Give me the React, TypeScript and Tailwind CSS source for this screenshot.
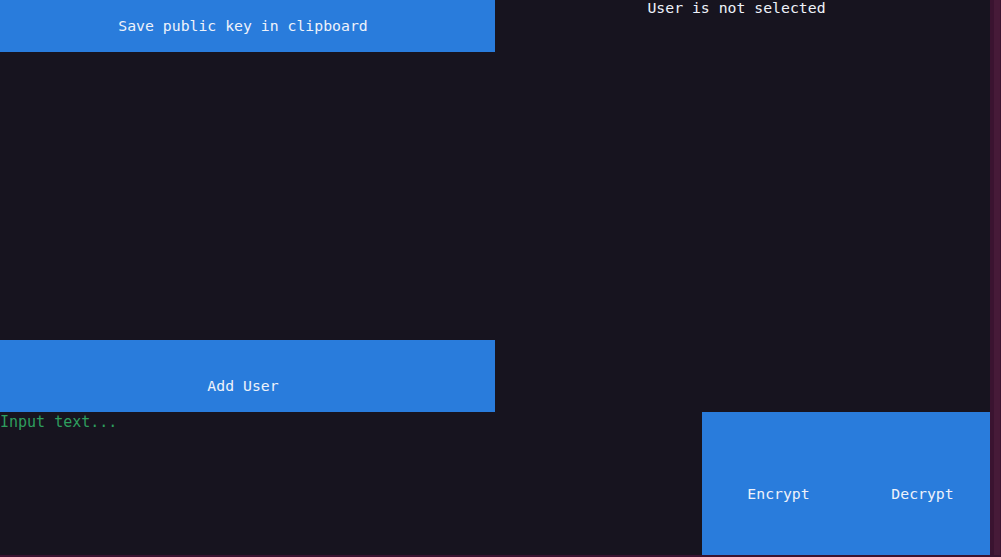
import React from "react";

const mono = { fontFamily: '"DejaVu Sans Mono", "Liberation Mono", monospace' };

export default function App() {
  return (
    <div className="w-[1001px] h-[557px] flex flex-col bg-[#3a1330] overflow-hidden" style={mono}>
      <div className="flex flex-1 min-h-0">
        <div className="w-[990px] h-[555px] bg-[#17141f] flex flex-col text-[14.8px] text-[#eef2fa]">
          <div className="flex h-[412px]">
            <div className="w-[495px] flex flex-col">
              <button className="h-[52px] bg-[#297cdc] flex items-center justify-center pt-[1px] pr-[9px]">
                Save public key in clipboard
              </button>
              <div className="flex-1" />
              <button className="h-[72px] bg-[#297cdc] flex items-center justify-center pt-[21px] pr-[9px]">
                Add User
              </button>
            </div>
            <div className="flex-1 flex justify-center">
              <div className="leading-[16px] mr-[12px]">User is not selected</div>
            </div>
          </div>
          <div className="flex flex-1">
            <div className="flex-1 text-[#2e9e5e] text-[15px] leading-[20px]">Input text...</div>
            <div className="w-[288px] bg-[#297cdc] flex items-center pt-[21px]">
              <button className="flex-1 pl-[9px] text-center">Encrypt</button>
              <button className="flex-1 pl-[9px] text-center">Decrypt</button>
            </div>
          </div>
        </div>
        <div className="w-[11px] h-[555px] bg-[#3a1330] flex pl-[4px] pr-[1px]">
          <div className="flex-1 bg-[#461a38]" />
        </div>
      </div>
      <div className="h-[2px] bg-[#3a1330]" />
    </div>
  );
}
